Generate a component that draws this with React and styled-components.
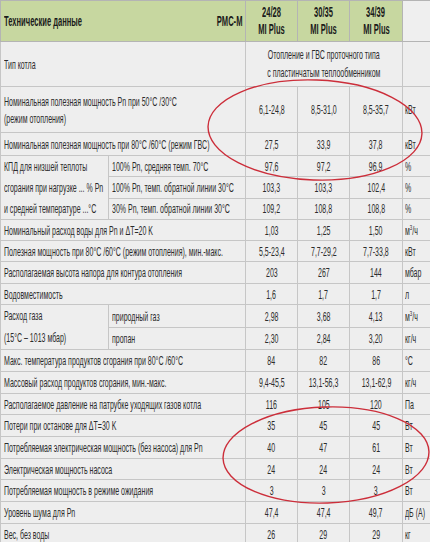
import React from 'react';
import styled, { createGlobalStyle } from 'styled-components';

const GlobalStyle = createGlobalStyle`
  html, body {
    margin: 0;
    padding: 0;
    background: #ffffff;
  }
  body {
    font-family: "Liberation Sans", Arial, sans-serif;
  }
`;

// the source font is a very condensed sans, so the text is squeezed horizontally
const SQUEEZE = 0.54;

const Page = styled.div`
  position: relative;
  width: 430px;
  height: 542px;
  overflow: hidden;
  background: #eeeeee;
`;

const Table = styled.table`
  width: 430px;
  border-collapse: collapse;
  table-layout: fixed;
  font-size: 13px;
  color: #2c2c2c;
`;

const Row = styled.tr`
  height: ${(p) => p.$h}px;
`;

const HeadCell = styled.th`
  padding: 0 3px;
  background: ${(p) => (p.$blank ? '#efefef' : '#c7d7a0')};
  border: 1px solid #b4b4b4;
  font-size: 14px;
  font-weight: 700;
  color: #1b1b1b;
  vertical-align: middle;
  overflow: visible;
`;

const Cell = styled.td`
  padding: 0 ${(p) => (p.$unit ? 2 : 3)}px;
  background: #eeeeee;
  border: 1px solid #c6c6c6;
  vertical-align: middle;
  overflow: visible;
`;

const HeadSplit = styled.div`
  display: flex;
  justify-content: space-between;
  align-items: center;
`;

const Line = styled.div`
  display: flex;
  justify-content: ${(p) => ({ center: 'center', right: 'flex-end' }[p.$align] || 'flex-start')};
  line-height: ${(p) => p.$lh || 15}px;
  white-space: nowrap;
`;

const Squeeze = styled.span`
  display: inline-block;
  flex-shrink: 0;
  white-space: nowrap;
  transform: scaleX(${SQUEEZE});
  transform-origin: ${(p) => p.$align || 'left'} center;
`;

const Overlay = styled.svg`
  position: absolute;
  left: 0;
  top: 0;
  pointer-events: none;
`;

const Text = ({ children, align, lh }) => (
  <Line $align={align} $lh={lh}>
    <Squeeze $align={align}>{children}</Squeeze>
  </Line>
);

const Sup3 = () => <sup style={{ fontSize: '8px', lineHeight: 0 }}>3</sup>;
const M3h = () => (
  <>
    м<Sup3 />/ч
  </>
);

const simpleRows = [
  { label: 'Номинальный расход воды для Pn и ΔT=20 K', v: ['1,03', '1,25', '1,50'], unit: <M3h />, h: 21 },
  { label: 'Полезная мощность при 80°C /60°C (режим отопления), мин.-макс.', v: ['5,5-23,4', '7,7-29,2', '7,7-33,8'], unit: 'кВт', h: 21 },
  { label: 'Располагаемая высота напора для контура отопления', v: ['203', '267', '144'], unit: 'мбар', h: 22 },
  { label: 'Водовместимость', v: ['1,6', '1,7', '1,7'], unit: 'л', h: 21 },
];

const lowerRows = [
  { label: 'Макс. температура продуктов сгорания при 80°C /60°C', v: ['84', '82', '86'], unit: '°C', h: 22 },
  { label: 'Массовый расход продуктов сгорания, мин.-макс.', v: ['9,4-45,5', '13,1-56,3', '13,1-62,9'], unit: 'кг/ч', h: 22 },
  { label: 'Располагаемое давление на патрубке уходящих газов котла', v: ['116', '105', '120'], unit: 'Па', h: 21 },
  { label: 'Потери при останове для ΔT=30 K', v: ['35', '45', '45'], unit: 'Вт', h: 22 },
  { label: 'Потребляемая электрическая мощность (без насоса) для Pn', v: ['40', '47', '61'], unit: 'Вт', h: 22 },
  { label: 'Электрическая мощность насоса', v: ['24', '24', '24'], unit: 'Вт', h: 21 },
  { label: 'Потребляемая мощность в режиме ожидания', v: ['3', '3', '3'], unit: 'Вт', h: 22 },
  { label: 'Уровень шума для Pn', v: ['47,4', '47,4', '49,7'], unit: 'дБ (А)', h: 22 },
  { label: 'Вес, без воды', v: ['26', '29', '29'], unit: 'кг', h: 22 },
];

const kpdRows = [
  { sub: '100% Pn, средняя темп. 70°C', v: ['97,6', '97,2', '96,9'], h: 21 },
  { sub: '100% Pn, темп. обратной линии 30°C', v: ['103,3', '103,3', '102,4'], h: 21 },
  { sub: '30% Pn, темп. обратной линии 30°C', v: ['109,2', '108,8', '108,8'], h: 21 },
];

const gasRows = [
  { sub: 'природный газ', v: ['2,98', '3,68', '4,13'], unit: <M3h />, h: 22 },
  { sub: 'пропан', v: ['2,30', '2,84', '3,20'], unit: 'кг/ч', h: 21 },
];

const Values = ({ v, unit }) => (
  <>
    {v.map((x, i) => (
      <Cell key={i}>
        <Text align="center">{x}</Text>
      </Cell>
    ))}
    <Cell $unit>
      <Text>{unit}</Text>
    </Cell>
  </>
);

const SimpleRow = ({ r }) => (
  <Row $h={r.h}>
    <Cell colSpan={2}>
      <Text>{r.label}</Text>
    </Cell>
    <Values v={r.v} unit={r.unit} />
  </Row>
);

export default function App() {
  return (
    <Page>
      <GlobalStyle />
      <Table>
        <colgroup>
          <col style={{ width: 108 }} />
          <col style={{ width: 137 }} />
          <col style={{ width: 52 }} />
          <col style={{ width: 52 }} />
          <col style={{ width: 53 }} />
          <col style={{ width: 28 }} />
        </colgroup>
        <tbody>
          <Row $h={41}>
            <HeadCell colSpan={2}>
              <HeadSplit>
                <Text>Технические данные</Text>
                <Text align="right">PMC-M</Text>
              </HeadSplit>
            </HeadCell>
            {['24/28', '30/35', '34/39'].map((m) => (
              <HeadCell key={m}>
                <Text align="center" lh={17}>{m}</Text>
                <Text align="center" lh={17}>MI Plus</Text>
              </HeadCell>
            ))}
            <HeadCell $blank />
          </Row>

          <Row $h={45}>
            <Cell colSpan={2}>
              <Text>Тип котла</Text>
            </Cell>
            <Cell colSpan={3}>
              <Text align="center" lh={18}>Отопление и ГВС проточного типа</Text>
              <Text align="center" lh={18}>с пластинчатым теплообменником</Text>
            </Cell>
            <Cell $unit />
          </Row>

          <Row $h={46}>
            <Cell colSpan={2}>
              <Text lh={17}>Номинальная полезная мощность Pn при 50°C /30°C</Text>
              <Text lh={17}>(режим отопления)</Text>
            </Cell>
            <Values v={['6,1-24,8', '8,5-31,0', '8,5-35,7']} unit="кВт" />
          </Row>

          <SimpleRow r={{ label: 'Номинальная полезная мощность при 80°C /60°C (режим ГВС)', v: ['27,5', '33,9', '37,8'], unit: 'кВт', h: 23 }} />

          {kpdRows.map((r, i) => (
            <Row $h={r.h} key={r.sub}>
              {i === 0 && (
                <Cell rowSpan={3}>
                  <Text lh={21}>КПД для низшей теплоты</Text>
                  <Text lh={21}>сгорания при нагрузке ... % Pn</Text>
                  <Text lh={21}>и средней температуре ...°C</Text>
                </Cell>
              )}
              <Cell>
                <Text>{r.sub}</Text>
              </Cell>
              <Values v={r.v} unit="%" />
            </Row>
          ))}

          {simpleRows.map((r) => (
            <SimpleRow r={r} key={r.label} />
          ))}

          {gasRows.map((r, i) => (
            <Row $h={r.h} key={r.sub}>
              {i === 0 && (
                <Cell rowSpan={2}>
                  <Text lh={22}>Расход газа</Text>
                  <Text lh={22}>(15°C – 1013 мбар)</Text>
                </Cell>
              )}
              <Cell>
                <Text>{r.sub}</Text>
              </Cell>
              <Values v={r.v} unit={r.unit} />
            </Row>
          ))}

          {lowerRows.map((r) => (
            <SimpleRow r={r} key={r.label} />
          ))}
        </tbody>
      </Table>

      <Overlay width="430" height="542" viewBox="0 0 430 542">
        <ellipse cx="315" cy="130" rx="107" ry="50" transform="rotate(2 315 130)" fill="none" stroke="#cc2e3a" strokeWidth="1.4" />
        <ellipse cx="326" cy="455" rx="103" ry="48" transform="rotate(-2 326 455)" fill="none" stroke="#cc2e3a" strokeWidth="1.4" />
      </Overlay>
    </Page>
  );
}
